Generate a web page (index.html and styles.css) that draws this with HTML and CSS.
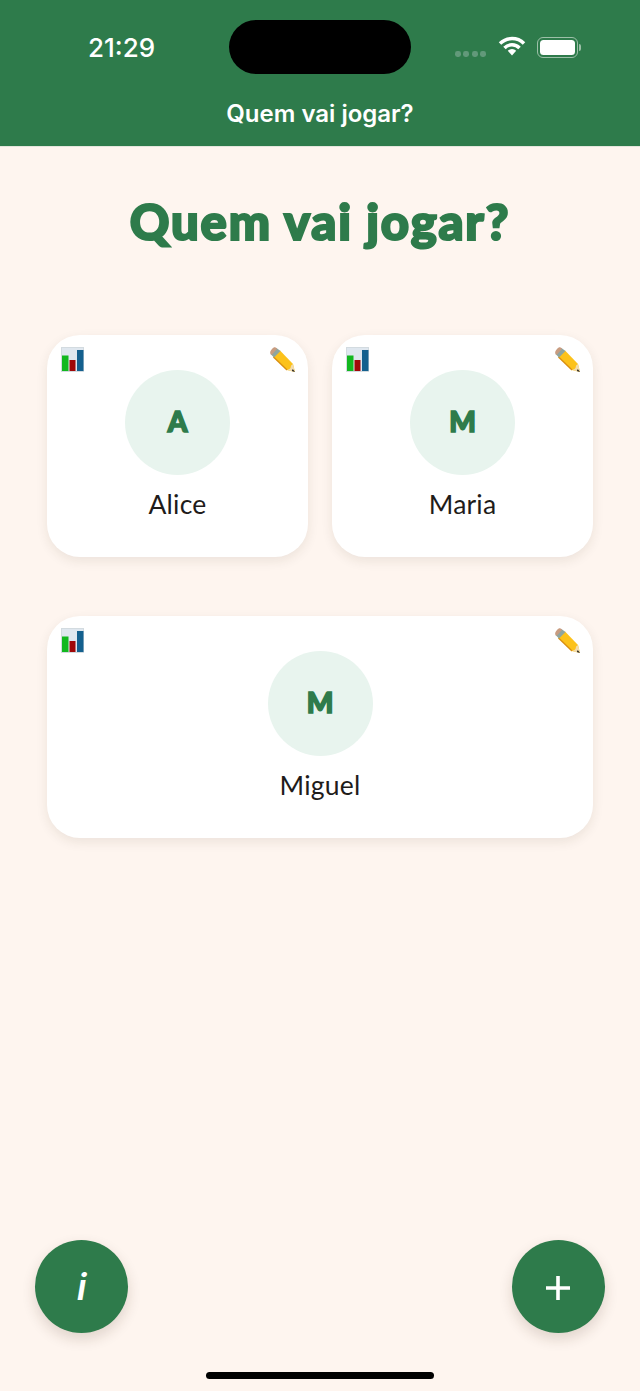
FILE: index.html
```html
<!doctype html>
<html lang="pt">
<head>
	<meta charset="UTF-8">
	<title>Quem vai jogar?</title>
	<link rel="stylesheet" href="styles.css">
</head>
<body>
	<svg class="defs" width="0" height="0">
		<symbol id="chart" viewBox="0 0 23 25">
			<rect x="0.500" y="0.500" width="22" height="24" fill="#dfe7ef" stroke="#d3dbe0"/>
			<rect x="1" y="8.500" width="6.500" height="15.500" fill="#12b81f"/>
			<rect x="8.500" y="13" width="6" height="11" fill="#a00808"/>
			<rect x="16" y="3" width="6.500" height="21" fill="#14608e"/>
		</symbol>
		<symbol id="pencil" viewBox="0 0 27 27">
			<path d="M11 4.500 24 18l2 8-8-2 -14-13.500z" fill="#fcc21b"/>
			<path d="M4.500 11 18 24" stroke="#d98f10" stroke-width="1.400"/>
			<path d="M24 18l2 8-8-2 2.500-1 1-1 .6-2.500z" fill="#f3dcae"/>
			<path d="M7.500 2l4 3-6.500 6.500L1.500 8z" fill="#8ea5a0"/>
			<path d="M3 3c1.500-1.800 3-2.200 4.500-1 .6.400 .6 1 0 1.500L3 8.500c-.6.500-1 .2-1.500-.5C.6 6.500 1.500 4.500 3 3z" fill="#c89c80"/>
			<path d="M23.800 23 26 26l-3.200-1z" fill="#222"/>
		</symbol>
	</svg>

	<div class="phone">
		<header class="top">
			<div class="status">
				<span class="time">21:29</span>
				<div class="status-icons">
					<div class="dots"><i></i><i></i><i></i><i></i></div>
					<svg class="wifi" width="28" height="20" viewBox="0 0 28 20">
						<path d="M2 7.500a17 17 0 0 1 24 0M6.500 12a10.500 10.500 0 0 1 15 0" fill="none" stroke="#fff" stroke-width="3.500"/>
						<path d="M9.800 14.800a6 6 0 0 1 8.400 0L14 19.500z" fill="#fff"/>
					</svg>
					<div class="battery"><div class="battery-fill"></div></div>
					<div class="battery-cap"></div>
				</div>
			</div>
			<div class="island"></div>
			<h2 class="nav-title">Quem vai jogar?</h2>
		</header>

		<main class="content">
			<h1 class="title">Quem vai jogar?</h1>
			<div class="players">
				<div class="card">
					<svg class="ico-chart"><use href="#chart"/></svg>
					<svg class="ico-pencil"><use href="#pencil"/></svg>
					<div class="avatar">A</div>
					<div class="name">Alice</div>
				</div>
				<div class="card">
					<svg class="ico-chart"><use href="#chart"/></svg>
					<svg class="ico-pencil"><use href="#pencil"/></svg>
					<div class="avatar">M</div>
					<div class="name">Maria</div>
				</div>
				<div class="card wide">
					<svg class="ico-chart"><use href="#chart"/></svg>
					<svg class="ico-pencil"><use href="#pencil"/></svg>
					<div class="avatar">M</div>
					<div class="name">Miguel</div>
				</div>
			</div>
		</main>

		<div class="actions">
			<div class="fab info">i</div>
			<div class="fab">
				<svg class="plus" width="24" height="24" viewBox="0 0 24 24"><path d="M0 12h24M12 0v24" stroke="#fff" stroke-width="3.600"/></svg>
			</div>
		</div>
		<div class="home-bar"></div>
	</div>
</body>
</html>
```

FILE: styles.css
```css
* { padding: 0; margin: 0; box-sizing: border-box; }
body { background: #fef5ef; font-family: "Inter", "Liberation Sans", sans-serif; }
.defs { display: block; height: 0; }

.phone { width: 640px; height: 1391px; display: flex; flex-direction: column; overflow: hidden; }

.top { height: 147px; background: #2e7b4b; position: relative; color: #fff; flex: none; border-bottom: 1px solid #e4e6dc; }
.status { height: 94px; display: flex; justify-content: space-between; padding: 0 59px 0 88px; align-items: flex-start; }
.time { font-size: 26px; font-weight: 500; line-height: 30px; margin-top: 33px; }
.status-icons { display: flex; align-items: center; margin-top: 36px; height: 22px; }
.dots { display: flex; gap: 2.500px; margin: 14px 12px 0 0; }
.dots i { width: 6px; height: 6px; border-radius: 40%; background: #62997a; }
.wifi { margin-right: 11px; margin-top: -2px; }
.battery { width: 41px; height: 21px; border: 1.500px solid #9cc0a8; border-radius: 6px; padding: 2px; }
.battery-fill { height: 100%; background: #fff; border-radius: 3.500px; }
.battery-cap { width: 2px; height: 7px; background: #9cc0a8; border-radius: 0 2px 2px 0; margin-left: 1px; }
.island { position: absolute; left: 229px; top: 20px; width: 182px; height: 54px; background: #000; border-radius: 27px; }
.nav-title { font-size: 24px; font-weight: 600; line-height: 28px; text-align: center; margin-top: 6px; }

.content { padding: 0 47px; flex: 1; }
.title { font-family: "Lato", "Noto Sans", sans-serif; font-size: 49px; font-weight: 900; line-height: 60px; letter-spacing: 1.800px; color: #2e7b4b; text-align: center; margin: 44px 0 84px; -webkit-text-stroke: 2.200px #2e7b4b; }
.players { display: grid; grid-template-columns: 1fr 1fr; column-gap: 24px; row-gap: 59px; }
.card { height: 222px; background: #fff; border-radius: 33px; position: relative; display: flex; flex-direction: column; align-items: center; padding-top: 35px; box-shadow: 0 4px 12px rgba(60, 40, 20, 0.09); }
.wide { grid-column: span 2; }
.ico-chart { position: absolute; left: 14px; top: 12px; width: 23px; height: 25px; }
.ico-pencil { position: absolute; right: 12px; top: 11px; width: 27px; height: 27px; }
.avatar { width: 105px; height: 105px; border-radius: 50%; background: #e8f4ee; color: #2e7b4b; font-family: "Lato", sans-serif; font-size: 28px; font-weight: 900; padding-bottom: 4px; display: flex; align-items: center; justify-content: center; -webkit-text-stroke: 1.600px #2e7b4b; }
.name { font-family: "Lato", "Noto Sans", sans-serif; font-size: 26.500px; letter-spacing: 0.200px; line-height: 32px; color: #1f1c1a; margin-top: 13px; }

.actions { display: flex; justify-content: space-between; padding: 0 35px; flex: none; }
.fab { width: 93px; height: 93px; border-radius: 50%; background: #2e7b4b; color: #fff; display: flex; align-items: center; justify-content: center; box-shadow: 0 6px 14px rgba(60, 40, 20, 0.16); }
.info { font-size: 37px; font-style: italic; font-weight: 600; }
.plus { margin-top: 2px; margin-left: -1px; }
.home-bar { width: 228px; height: 7px; border-radius: 4px; background: #000; margin: 39px auto 12px; flex: none; }
```
